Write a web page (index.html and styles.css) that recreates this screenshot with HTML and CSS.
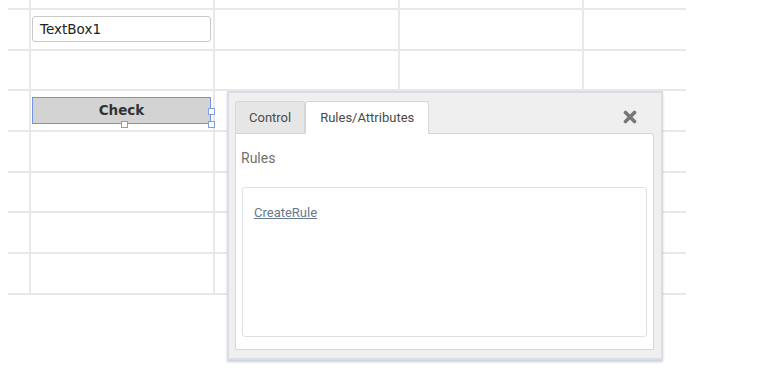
FILE: index.html
```html
<!DOCTYPE html>
<html lang="en">
<head>
    <meta charset="UTF-8">
    <title>Form Designer</title>
    <link rel="stylesheet" href="styles.css">
</head>
<body>
    <div class="canvas">
        <div class="grid">
            <div class="cell top"></div><div class="cell top"></div><div class="cell top"></div><div class="cell top"></div><div class="cell top last"></div>

            <div class="cell"></div>
            <div class="cell"><div class="textbox">TextBox1</div></div>
            <div class="cell"></div><div class="cell"></div><div class="cell last"></div>

            <div class="cell"></div><div class="cell"></div><div class="cell"></div><div class="cell"></div><div class="cell last"></div>

            <div class="cell"></div>
            <div class="cell">
                <div class="check-btn">
                    Check
                    <span class="handle h-right"></span>
                    <span class="handle h-corner"></span>
                    <span class="handle h-bottom"></span>
                </div>
            </div>
            <div class="cell"></div><div class="cell"></div><div class="cell last"></div>

            <div class="cell"></div><div class="cell"></div><div class="cell"></div><div class="cell"></div><div class="cell last"></div>
            <div class="cell"></div><div class="cell"></div><div class="cell"></div><div class="cell"></div><div class="cell last"></div>
            <div class="cell"></div><div class="cell"></div><div class="cell"></div><div class="cell"></div><div class="cell last"></div>
            <div class="cell"></div><div class="cell"></div><div class="cell"></div><div class="cell"></div><div class="cell last"></div>
        </div>

        <!-- properties popup -->
        <div class="props-popup">
            <div class="tab-bar">
                <div class="tab">Control</div>
                <div class="tab active">Rules/Attributes</div>
                <span class="close-btn">
                    <svg width="14" height="14" viewBox="0 0 14 14">
                        <path d="M2.5 2.5 L11.5 11.5 M11.5 2.5 L2.5 11.5" stroke="#777" stroke-width="3.6" stroke-linecap="round"/>
                    </svg>
                </span>
            </div>
            <div class="tab-panel">
                <div class="panel-title">Rules</div>
                <div class="rules-box">
                    <a href="#" class="rule-link">CreateRule</a>
                </div>
            </div>
        </div>
    </div>
</body>
</html>
```

FILE: styles.css
```css
* {
    margin: 0;
    padding: 0;
    box-sizing: border-box;
}

body {
    background-color: #fff;
    font-family: Roboto, "Liberation Sans", sans-serif;
}

.canvas {
    position: relative;
    width: 763px;
    height: 374px;
    padding-left: 8px;
}

.grid {
    display: grid;
    grid-template-columns: 23px 184px 185px 184px 102px;
    grid-template-rows: 10px repeat(7, 40.7px);
    width: 678px;
}

.cell {
    border-right: 2px solid #e8e8ea;
    border-bottom: 2px solid #e8e8ea;
    padding: 6px 0 0 1px;
}

.cell.top {
    padding: 0;
}

.cell.last {
    border-right: none;
}

.textbox {
    width: 179px;
    height: 26px;
    border: 1px solid #c9c9c9;
    border-radius: 3px;
    padding-left: 7px;
    font-family: "DejaVu Sans", Verdana, sans-serif;
    font-size: 13.5px;
    line-height: 24px;
    color: #222;
}

.check-btn {
    position: relative;
    width: 179px;
    height: 27px;
    background-color: #d3d3d3;
    border: 1px solid #7093e3;
    text-align: center;
    font-family: "DejaVu Sans", Verdana, sans-serif;
    font-weight: bold;
    font-size: 13.5px;
    line-height: 25px;
    color: #333;
}

.handle {
    position: absolute;
    width: 7px;
    height: 7px;
    background-color: #fff;
    border: 1px solid #7f9fe8;
}

.h-right {
    right: -5px;
    top: 10px;
}

.h-corner {
    right: -5px;
    bottom: -5px;
}

.h-bottom {
    left: 88px;
    bottom: -5px;
}

.props-popup {
    position: absolute;
    left: 227px;
    top: 91px;
    width: 436px;
    height: 269px;
    background-color: #efefef;
    border: 2px solid #dadde3;
    box-shadow: 0 2px 2px rgba(170, 178, 195, 0.6);
    padding: 8px 7px 8px 6px;
    display: flex;
    flex-direction: column;
}

.tab-bar {
    display: flex;
    align-items: flex-end;
    height: 32px;
    position: relative;
}

.tab {
    height: 32px;
    padding: 0 13px;
    font-size: 13px;
    line-height: 31px;
    color: #4a4a4a;
    background-color: #e6e6e6;
    border: 1px solid #d6d6d6;
    border-bottom: none;
    border-radius: 3px 3px 0 0;
}

.tab.active {
    background-color: #fff;
    padding: 0 14px;
    margin-bottom: -1px;
    height: 33px;
    position: relative;
    z-index: 1;
}

.close-btn {
    position: absolute;
    right: 17px;
    top: 9px;
    line-height: 0;
}

.tab-panel {
    flex: 1;
    background-color: #fff;
    border: 1px solid #d6d6d6;
    border-radius: 0 3px 0 0;
    padding: 0 6px 12px 6px;
    display: flex;
    flex-direction: column;
}

.panel-title {
    font-size: 14px;
    color: #707070;
    line-height: 18px;
    margin-top: 15px;
    margin-left: -1px;
}

.rules-box {
    flex: 1;
    margin-top: 20px;
    border: 1px solid #dfe0e5;
    border-radius: 3px;
    padding: 14px 11px;
}

.rule-link {
    font-size: 13px;
    color: #687890;
    line-height: 18px;
    text-decoration: underline;
}
```
